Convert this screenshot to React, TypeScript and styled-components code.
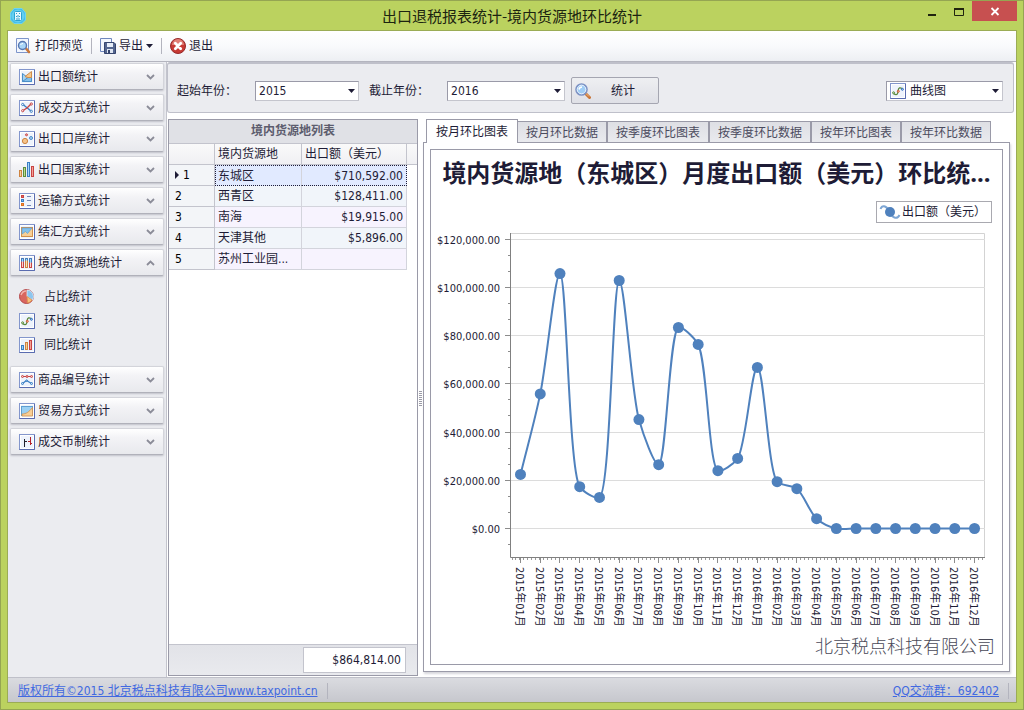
import React, { useState } from "react";
import styled, { createGlobalStyle, css } from "styled-components";

const ink = "#1e1c36";
const line = "#9a9aa8";
const softLine = "#c3c4cd";
const surface = "#ebecf0";
const uiFont = '"DejaVu Sans Condensed", "Noto Sans CJK SC", sans-serif';

const GlobalStyle = createGlobalStyle`
  * { box-sizing: border-box; }
  body { margin: 0; font: 12px/16px ${uiFont}; color: ${ink}; }
  button, select { font: inherit; color: inherit; }
`;

const Window = styled.div`
  min-height: 100vh;
  display: flex;
  flex-direction: column;
  padding: 0 6px 6px;
  background: #bbd25f;
  border: 1px solid #95a552;
`;

const TitleBar = styled.header`
  display: flex;
  height: 29px;
  flex: none;
`;

const TitleSide = styled.div<{ $end?: boolean }>`
  flex: 1;
  display: flex;
  align-items: ${(p) => (p.$end ? "flex-start" : "center")};
  justify-content: ${(p) => (p.$end ? "flex-end" : "flex-start")};
  padding-left: 3px;
`;

const WindowTitle = styled.h1`
  margin: 0;
  font: 15px/29px "Noto Sans CJK SC", sans-serif;
  color: #1c2410;
`;

const WindowButton = styled.button<{ $close?: boolean }>`
  width: ${(p) => (p.$close ? 45 : 27)}px;
  height: 20px;
  padding: 0;
  border: 0;
  display: flex;
  align-items: center;
  justify-content: center;
  background: ${(p) => (p.$close ? "#c75050" : "transparent")};
`;

const Client = styled.div`
  flex: 1;
  display: flex;
  flex-direction: column;
  border: 1px solid #9bac55;
  background: #fff;
`;

const Toolbar = styled.nav`
  height: 31px;
  flex: none;
  display: flex;
  align-items: center;
  padding-left: 8px;
  gap: 8px;
  background: linear-gradient(#fff, #f9fafc 50%, #edeff3);
  border-bottom: 1px solid #b4b5bf;
`;

const ToolButton = styled.button`
  display: flex;
  align-items: center;
  gap: 3px;
  height: 24px;
  padding: 0;
  border: 0;
  background: none;
`;

const Divider = styled.span`
  width: 1px;
  height: 16px;
  background: #b3b4be;
`;

const Body = styled.div`
  flex: 1;
  display: flex;
`;

const Sidebar = styled.aside`
  width: 159px;
  flex: none;
  display: flex;
  flex-direction: column;
  gap: 4px;
  padding: 1px 2px 0;
  background: ${surface};
  border-right: 1px solid ${softLine};
`;

const GroupButton = styled.button`
  display: flex;
  align-items: center;
  gap: 3px;
  width: 100%;
  height: 27px;
  padding: 0 8px;
  border: 1px solid #d3d4da;
  border-bottom-color: #b0b1ba;
  border-radius: 2px;
  box-shadow: 0 1px 2px rgba(80, 80, 100, 0.28);
  background: linear-gradient(#fff, #f3f3f6 35%, #e8e9ed);

  span { flex: 1; text-align: left; }
`;

const SubList = styled.ul`
  list-style: none;
  margin: 0;
  padding: 5px 0;
`;

const SubItem = styled.a`
  display: flex;
  align-items: center;
  gap: 9px;
  height: 24px;
  padding-left: 9px;
  color: inherit;
  text-decoration: none;
`;

const Main = styled.main`
  flex: 1;
  min-width: 0;
  display: flex;
  flex-direction: column;
`;

const FilterBar = styled.form`
  display: flex;
  align-items: center;
  gap: 10px;
  height: 51px;
  padding: 5px 10px 0 9px;
  margin-right: 2px;
  background: ${surface};
  border: 1px solid #bfc0ca;
  border-width: 2px 1px 1px;
  border-radius: 3px;
`;

const Field = styled.label`
  display: flex;
  align-items: center;
  gap: 18px;
`;

const SelectBox = styled.span<{ $width: number }>`
  display: flex;
  align-items: center;
  gap: 4px;
  width: ${(p) => p.$width}px;
  height: 20px;
  padding: 0 3px;
  background: #fff;
  border: 1px solid #c4c5cd;
  border-top-color: ${line};
  border-left-color: ${line};

  select {
    flex: 1;
    min-width: 0;
    height: 18px;
    padding: 0;
    border: 0;
    appearance: none;
    background: none;
    outline: 0;
  }
`;

const ActionButton = styled.button`
  display: flex;
  align-items: center;
  gap: 20px;
  width: 88px;
  height: 27px;
  padding: 0 3px;
  margin-left: -4px;
  border: 1px solid #a5a6b1;
  border-radius: 2px;
  background: linear-gradient(#eeeff2, #dfe0e6);
`;

const Spacer = styled.span`
  flex: 1;
`;

const Workspace = styled.div`
  flex: 1;
  display: flex;
  padding: 6px 6px 0 1px;
`;

const GridPanel = styled.section`
  width: 250px;
  flex: none;
  display: flex;
  flex-direction: column;
  margin-bottom: 1px;
  border: 1px solid ${line};
`;

const GridTitle = styled.h2`
  margin: 0;
  font: bold 12px/23px ${uiFont};
  text-align: center;
  color: #5d5d6e;
  background: #e0e1e6;
  border-bottom: 1px solid ${softLine};
`;

const DataTable = styled.table`
  width: 100%;
  table-layout: fixed;
  border-collapse: separate;
  border-spacing: 0;
`;

const cell = css`
  height: 21px;
  padding: 0 3px;
  text-align: left;
  font-weight: normal;
  white-space: nowrap;
  overflow: hidden;
  text-overflow: ellipsis;
  border: solid #d3d4dc;
  border-width: 0 1px 1px 0;
`;

const HeadCell = styled.th<{ $last?: boolean }>`
  ${cell}
  background: linear-gradient(#fafafa, #f0f0f3);
  border-color: ${softLine};
  ${(p) => p.$last && "border-right: 0;"}
`;

const RowHead = styled.th`
  ${cell}
  padding-left: 6px;
  color: #000;
  background: #f3f5f8;
  border-color: ${softLine};

  svg { margin-right: 4px; }
`;

const Cell = styled.td<{ $tone: "current" | "even" | "odd"; $edge?: "start" | "end" }>`
  ${cell}
  text-align: ${(p) => (p.$edge === "end" ? "right" : "left")};
  background: ${(p) => ({ current: "#e1eaff", even: "#f1f5fa", odd: "#f7f3fe" })[p.$tone]};
  ${(p) =>
    p.$tone === "current" &&
    css`
      border-top: 1px dotted ${ink};
      border-bottom: 1px dotted ${ink};
      ${p.$edge === "start" ? `border-left: 1px dotted ${ink}; padding-left: 2px;` : `border-right: 1px dotted ${ink};`}
    `}
`;

const GridFooter = styled.footer`
  height: 31px;
  margin-top: auto;
  padding: 2px 11px 0 0;
  display: flex;
  justify-content: flex-end;
  align-items: flex-start;
  border-top: 1px solid ${softLine};
  background: linear-gradient(#e2e3e8, #e9eaee);
`;

const Total = styled.output`
  width: 103px;
  padding: 0 4px;
  line-height: 24px;
  text-align: right;
  background: #fff;
  border: 1px solid ${softLine};
`;

const Splitter = styled.div`
  width: 5px;
  flex: none;
  display: flex;
  align-items: center;
`;

const ChartPanel = styled.section`
  flex: 1;
  min-width: 0;
  display: flex;
  flex-direction: column;
  margin-bottom: 5px;
`;

const TabArea = styled.div`
  position: relative;
  z-index: 1;
  margin-bottom: -1px;
  padding-bottom: 1px;
`;

const TabList = styled.div`
  display: flex;
  align-items: flex-end;
  height: 23px;
  padding-left: 3px;
`;

const Tab = styled.button<{ $active: boolean }>`
  height: 21px;
  padding: 2px 8px 0;
  white-space: nowrap;
  color: #4b4b5e;
  border: 1px solid ${line};
  border-left-width: 0;
  border-right-width: 2px;
  border-bottom: 0;
  background: linear-gradient(#dedfe4, #e9eaee);

  &:last-child { border-right-width: 1px; }

  ${(p) =>
    p.$active &&
    css`
      height: 24px;
      margin-bottom: -1px;
      padding: 0 9px;
      color: ${ink};
      background: #fff;
      border-width: 1px 1px 0;
    `}
`;

const TabPane = styled.div`
  flex: 1;
  display: flex;
  flex-direction: column;
  padding: 6px;
  background: #fff;
  border: 1px solid ${line};
  box-shadow: 1px 2px 2px rgba(90, 90, 110, 0.25);
`;

const ChartCard = styled.figure`
  flex: 1;
  margin: 0;
  display: flex;
  flex-direction: column;
  border: 1px solid ${line};
`;

const ChartTitle = styled.figcaption`
  padding: 5px 0 10px;
  text-align: center;
  white-space: nowrap;
  overflow: hidden;
  font: bold 24px/36px "Noto Sans", "Noto Sans CJK SC", sans-serif;
`;

const Legend = styled.div`
  align-self: flex-end;
  display: flex;
  align-items: center;
  width: 116px;
  height: 22px;
  margin-right: 10px;
  padding-left: 2px;
  gap: 1px;
  white-space: nowrap;
  border: 1px solid #a9a9b0;
`;

const Plot = styled.svg`
  display: block;
  width: 100%;
  height: auto;
  margin-top: 3px;
  font: 11px ${uiFont};
  fill: ${ink};
`;

const Watermark = styled.p`
  margin: 0;
  padding-right: 7px;
  text-align: right;
  font: 300 18px/26px "Noto Sans CJK SC", sans-serif;
  color: #4a4a58;
`;

const StatusBar = styled.footer`
  display: flex;
  align-items: center;
  gap: 9px;
  height: 25px;
  flex: none;
  padding: 1px 7px 0 10px;
  border-top: 1px solid #bfc0c9;
  background: linear-gradient(#dadbe0, #c6c7cd);

  a { color: #4169e1; }
`;

/* ---- icons ---- */

const Svg = ({ children, w = 16, h = 16 }: { children: React.ReactNode; w?: number; h?: number }) => (
  <svg width={w} height={h} viewBox={`0 0 ${w} ${h}`} fill="none" aria-hidden="true">
    {children}
  </svg>
);

const Frame = () => (
  <>
    <rect x="0.5" y="0.5" width="15" height="15" fill="#eef3fc" stroke="#8396cc" />
    <path d="M15.5 1V15.5H0.5" stroke="#5a6cb0" />
    <rect x="1.5" y="1.5" width="13" height="13" stroke="#fff" />
  </>
);

const Lens = () => (
  <Svg>
    <path d="M10 10L14.5 14.5" stroke="#c8763a" strokeWidth="3" strokeLinecap="round" />
    <path d="M10.5 10L14 13.5" stroke="#f3bb7c" />
    <circle cx="6.5" cy="6.5" r="5.5" fill="#9fcdf5" stroke="#7d92c4" strokeWidth="1.6" />
    <circle cx="6.5" cy="6.5" r="4.3" stroke="#e6f1fc" />
    <path d="M4 6.5Q4.5 4 7 4" stroke="#fff" strokeWidth="1.5" />
  </Svg>
);

const icons: Record<string, React.ReactNode> = {
  area: (
    <Svg>
      <Frame />
      <path d="M3.5 12.5V4.5L8.5 8.5L12.5 12.5Z" fill="#a5d3f0" stroke="#4b8fc8" />
      <path d="M3.5 12.5L9 8.500L12.5 8.5V12.500Z" fill="#84bfe8" stroke="#4b8fc8" />
      <path d="M6 7.5L12.5 2.500V8.5H9Z" fill="#f8c88a" stroke="#cf8d4b" />
    </Svg>
  ),
  cross: (
    <Svg>
      <Frame />
      <path d="M4 4.500L12 11" stroke="#3a7fc4" strokeWidth="1.4" />
      <path d="M4 10.5L8 8L12 4" stroke="#c94444" strokeWidth="1.4" />
      <g fill="#fff">
        <circle cx="3.7" cy="4.5" r="1.1" stroke="#3a7fc4" />
        <circle cx="12.3" cy="11.3" r="1.1" stroke="#3a7fc4" />
        <circle cx="3.7" cy="10.7" r="1.1" stroke="#c94444" />
        <circle cx="12.3" cy="4" r="1.1" stroke="#c94444" />
      </g>
    </Svg>
  ),
  bubbles: (
    <Svg>
      <Frame />
      <circle cx="6" cy="10" r="2.6" fill="#f6c48a" stroke="#cd8340" />
      <circle cx="7.5" cy="3.8" r="1" fill="#f2a7a2" stroke="#c94444" />
      <circle cx="12" cy="7" r="1.5" fill="#a5d3f5" stroke="#4a8ac8" />
    </Svg>
  ),
  bars: (
    <Svg>
      <rect x="0.5" y="8.5" width="2" height="6" fill="#f9cf95" stroke="#cd8340" />
      <rect x="4.5" y="5.5" width="2" height="9" fill="#bfdc8f" stroke="#5b8c3c" />
      <rect x="8.5" y="0.5" width="2" height="14" fill="#a9d6f7" stroke="#3a7fc4" />
      <rect x="12.5" y="4.5" width="2" height="10" fill="#f3a095" stroke="#c94444" />
    </Svg>
  ),
  list: (
    <Svg>
      <Frame />
      <rect x="2.5" y="2.5" width="2" height="2" fill="#e06a5f" stroke="#c94444" />
      <rect x="2.5" y="6.5" width="2" height="2" fill="#7ab8ec" stroke="#3a7fc4" />
      <rect x="2.5" y="10.5" width="2" height="2" fill="#f39a40" stroke="#dd6e20" />
      <path d="M8 3.5H12M8 7.5H12M8 12.5H12" stroke="#7688b8" />
    </Svg>
  ),
  envelope: (
    <Svg>
      <Frame />
      <rect x="2.5" y="3.5" width="11" height="9" fill="#f8cf96" stroke="#d0904c" />
      <path d="M3 4H13L8.5 9.5L6.5 7.5L3 10Z" fill="#84c1ec" stroke="#5e9fd0" strokeWidth="0.7" />
    </Svg>
  ),
  stacked: (
    <Svg>
      <Frame />
      <rect x="2.5" y="3.5" width="2" height="9" fill="#fbd3cd" stroke="#c94444" />
      <rect x="6.5" y="3.5" width="2" height="9" fill="#fbe0b8" stroke="#cd8340" />
      <rect x="10.5" y="3.5" width="2" height="9" fill="#fbd3cd" stroke="#c94444" />
      <path d="M2.5 6.5V3.5H4.5V6.5M6.5 5.5V3.5H8.5V5.5M10.5 7.5V3.5H12.5V7.5" fill="#a9d6f7" stroke="#3a7fc4" />
    </Svg>
  ),
  pie: (
    <Svg>
      <circle cx="7.5" cy="7.5" r="7" fill="#d9665f" stroke="#b5484a" />
      <path d="M8 7.5V1A6.5 6.5 0 0 1 13.5 11Z" fill="#8fc6ee" stroke="#e9f4fb" strokeWidth="0.7" />
      <path d="M8 7.5L13 11A6.5 6.5 0 0 1 8.5 14Z" fill="#f7bf7c" stroke="#d98c48" strokeWidth="0.7" />
      <path d="M2 6Q3.5 2 7 2" stroke="#f3b3ad" strokeWidth="1.5" />
    </Svg>
  ),
  spline: (
    <Svg>
      <Frame />
      <path d="M3.5 10.5C7 13 8 11 8 8C8.5 4.5 10 4 12.5 6" stroke="#57883c" strokeWidth="1.3" />
      <circle cx="3.6" cy="9.8" r="1" fill="#dff0c4" stroke="#57883c" />
      <circle cx="8.3" cy="8.3" r="1" fill="#f9b4a0" stroke="#cf5a30" />
      <circle cx="12.4" cy="6.3" r="1" fill="#b8dcfa" stroke="#2d6cc0" />
    </Svg>
  ),
  columns: (
    <Svg>
      <Frame />
      <rect x="2.5" y="8.5" width="2" height="4" fill="#9fd0f5" stroke="#3a7fc4" />
      <rect x="6.5" y="5.5" width="2" height="7" fill="#f9cf95" stroke="#cd8340" />
      <rect x="10.5" y="3.5" width="2" height="9" fill="#f3a095" stroke="#c94444" />
    </Svg>
  ),
  lines: (
    <Svg>
      <Frame />
      <path d="M3.5 4.5H12.5" stroke="#c94444" />
      <path d="M3.5 11.5L7.5 8.5L12.5 11.5" stroke="#3a7fc4" strokeWidth="1.3" />
      <g fill="#f7c9c5" stroke="#c94444">
        <circle cx="3.5" cy="4.5" r="1" />
        <circle cx="8" cy="4.5" r="1" />
        <circle cx="12.5" cy="4.5" r="1" />
      </g>
      <g fill="#c6e0fa" stroke="#3a7fc4">
        <circle cx="3.5" cy="11.5" r="1" />
        <circle cx="7.7" cy="8.700" r="0.8" />
        <circle cx="12.5" cy="11.5" r="1" />
      </g>
    </Svg>
  ),
  landscape: (
    <Svg>
      <Frame />
      <rect x="2.5" y="3.5" width="11" height="9" fill="#9bd0f3" stroke="#5e9fd0" />
      <path d="M3 13V11C7 11 10 9 13.5 4.5V13Z" fill="#f8cf96" stroke="#d0904c" strokeWidth="0.8" />
    </Svg>
  ),
  stock: (
    <Svg>
      <Frame />
      <path d="M5.5 5V13M6 7.5H8" stroke="#20202c" />
      <path d="M11.5 3V11M9 7.5H11M12 9.5H13" stroke="#b5222a" />
    </Svg>
  ),
  export: (
    <Svg>
      <path d="M0.5 0.5H11.5V13.5H0.5Z" fill="#f3f7fd" stroke="#6e86bd" />
      <path d="M4.5 4.5H14L15.5 6V15.5H4.5Z" fill="#54668f" stroke="#35456e" />
      <rect x="7" y="5" width="6" height="4" fill="#e6edf8" />
      <rect x="7" y="11" width="6" height="4" fill="#dfe6f2" />
      <rect x="8" y="12" width="2" height="3" fill="#35456e" />
    </Svg>
  ),
  preview: (
    <Svg>
      <path d="M0.5 0.5H12.5V14.5H0.5Z" fill="#f3f7fd" stroke="#7d95cb" />
      <path d="M10 10.5L13 14" stroke="#c8763a" strokeWidth="2.6" strokeLinecap="round" />
      <circle cx="6.5" cy="7.5" r="4" fill="#a9d5f7" stroke="#5876b0" strokeWidth="1.4" />
      <path d="M4.5 7Q5 5.500 7 5.500" stroke="#fff" />
    </Svg>
  ),
  quit: (
    <Svg>
      <circle cx="8" cy="8" r="7.5" fill="#c73a34" stroke="#96292a" />
      <path d="M2 7A6 6 0 0 1 14 7" fill="#e07f76" />
      <path d="M5.3 5.3L10.7 10.7M10.7 5.3L5.3 10.7" stroke="#fff" strokeWidth="2.8" strokeLinecap="round" />
    </Svg>
  ),
  app: (
    <Svg>
      <path d="M4 0.5H12L15.5 5V12L12 15.5H4L0.5 12V5Z" fill="#45bfe8" stroke="#6fd3f0" />
      <circle cx="8" cy="8" r="6.5" fill="#64cff0" />
      <rect x="4.5" y="3.5" width="7" height="9" rx="1" fill="#e8f9ff" stroke="#2ba3d2" />
      <path d="M6 5.5H7M9 5.5H10M8 7V9.5M6 8L7 9M10 8L9 9M6 11H10" stroke="#2d9fca" />
    </Svg>
  ),
};

const Chevron = ({ up }: { up?: boolean }) => (
  <Svg w={9} h={6}>
    <path d={up ? "M1 5L4.5 1.5L8 5" : "M1 1L4.5 4.5L8 1"} stroke="#8b8c98" strokeWidth="1.8" />
  </Svg>
);

const Caret = () => (
  <Svg w={7} h={4}>
    <path d="M0 0H7L3.5 4Z" fill={ink} />
  </Svg>
);

/* ---- data ---- */

const groups: { icon: string; label: string; items?: [string, string][] }[] = [
  { icon: "area", label: "出口额统计" },
  { icon: "cross", label: "成交方式统计" },
  { icon: "bubbles", label: "出口口岸统计" },
  { icon: "bars", label: "出口国家统计" },
  { icon: "list", label: "运输方式统计" },
  { icon: "envelope", label: "结汇方式统计" },
  {
    icon: "stacked",
    label: "境内货源地统计",
    items: [["pie", "占比统计"], ["spline", "环比统计"], ["columns", "同比统计"]],
  },
  { icon: "lines", label: "商品编号统计" },
  { icon: "landscape", label: "贸易方式统计" },
  { icon: "stock", label: "成交币制统计" },
];

const rows = [
  ["东城区", "$710,592.00"],
  ["西青区", "$128,411.00"],
  ["南海", "$19,915.00"],
  ["天津其他", "$5,896.00"],
  ["苏州工业园...", ""],
];

const tabs = ["按月环比图表", "按月环比数据", "按季度环比图表", "按季度环比数据", "按年环比图表", "按年环比数据"];

const values = [
  22420, 55850, 105800, 17360, 12870, 102900, 45200, 26500, 83400, 76400, 24000, 29060,
  66850, 19430, 16520, 4070, 0, 0, 0, 0, 0, 0, 0, 0,
];

/* ---- chart ---- */

type Point = [number, number];
const left = 79;
const right = 554;
const top = 7;
const bottom = 331;
const zeroY = 302;
const yOf = (v: number) => zeroY - (v / 20000) * 48.2;
const xOf = (i: number) => 89.5 + i * 19.74;
const crisp = (v: number) => Math.floor(v) + 0.5;

const distance = (a: Point, b: Point) => Math.hypot(b[0] - a[0], b[1] - a[1]);

const unit = (a: Point, b: Point): Point => {
  const d = distance(a, b) || 1;
  return [(b[0] - a[0]) / d, (b[1] - a[1]) / d];
};

/* Smooth curve whose tangent at each point bisects its two segments;
   a short neighbouring segment pulls the handle of a long one in. */
function smoothPath(pts: Point[]) {
  const last = pts.length - 1;
  const lengths = pts.slice(1).map((p, i) => distance(pts[i], p));
  const tangent = (i: number): Point => {
    const j = Math.max(i - 1, 0);
    const k = Math.min(i, last - 1);
    const p = unit(pts[j], pts[j + 1]);
    const n = unit(pts[k], pts[k + 1]);
    return [(p[0] + n[0]) / 2, (p[1] + n[1]) / 2];
  };
  const reach = (own: number, neighbour = own) => Math.sqrt(own * Math.min(own, neighbour)) / 3;
  return pts.slice(1).reduce((d, b, i) => {
    const a = pts[i];
    const s = tangent(i);
    const e = tangent(i + 1);
    const rs = reach(lengths[i], lengths[i - 1]);
    const re = reach(lengths[i], lengths[i + 1]);
    return `${d}C${a[0] + s[0] * rs} ${a[1] + s[1] * rs} ${b[0] - e[0] * re} ${b[1] - e[1] * re} ${b[0]} ${b[1]}`;
  }, `M${pts[0][0]} ${pts[0][1]}`);
}

function SplineChart() {
  const pts = values.map((v, i): Point => [xOf(i), yOf(v) + 0.5]);
  const minor: number[] = [];
  for (let x = left + 2; x < right; x += 3.95) minor.push(crisp(x));
  const ySteps = Array.from({ length: 20 }, (_, i) => i - 1);
  return (
    <Plot viewBox="0 0 571 406" role="img" aria-label="出口额（美元）">
      <path d={`M${left} ${top + 0.5}H${right - 0.5}V${bottom}`} fill="none" stroke="#d3d3d3" />
      {ySteps.map((s) => {
        const y = crisp(yOf((s * 20000) / 3) + 0.4);
        const major = s % 3 === 0;
        return (
          <g key={s}>
            {major && <path d={`M${left + 1} ${y}H${right}`} stroke="#dcdcdc" />}
            <path d={`M${left - (major ? 5 : 2)} ${y}H${left}`} stroke="#8c8c8c" />
            {major && (
              <text x={69} y={y + 4} textAnchor="end">
                {`$${((s / 3) * 20000).toLocaleString("en-US")}.00`}
              </text>
            )}
          </g>
        );
      })}
      {minor.map((x) => (
        <path key={x} d={`M${x} ${bottom + 1}v2`} stroke="#9a9a9a" />
      ))}
      <path d={`M${left + 0.5} ${top}V${bottom + 0.5}H${right}`} fill="none" stroke="#808080" />
      <path d={smoothPath(pts)} fill="none" stroke="#4f81bd" strokeWidth="2" />
      {pts.map(([x, y], i) => {
        const label = `${2015 + Math.floor(i / 12)}年${String((i % 12) + 1).padStart(2, "0")}月`;
        return (
          <g key={label}>
            <circle cx={x} cy={y} r="5.5" fill="#4f81bd" />
            <path d={`M${crisp(x)} ${bottom + 1}v5`} stroke="#8c8c8c" />
            <text transform={`translate(${Math.floor(x) - 4} 341) rotate(90)`}>{label}</text>
          </g>
        );
      })}
    </Plot>
  );
}

export default function App() {
  const [tab, setTab] = useState(0);
  return (
    <Window>
      <GlobalStyle />
      <TitleBar>
        <TitleSide>{icons.app}</TitleSide>
        <WindowTitle>出口退税报表统计-境内货源地环比统计</WindowTitle>
        <TitleSide $end>
          <WindowButton aria-label="最小化">
            <Svg><path d="M4 12H12" stroke="#20240f" strokeWidth="2" /></Svg>
          </WindowButton>
          <WindowButton aria-label="最大化">
            <Svg>
              <path d="M3.5 5.5H12.5V12.5H3.5Z" stroke="#20240f" />
              <path d="M3 6H13" stroke="#20240f" strokeWidth="2" />
            </Svg>
          </WindowButton>
          <WindowButton $close aria-label="关闭">
            <Svg><path d="M4.500 5L11.5 12M11.5 5L4.5 12" stroke="#fff" strokeWidth="1.8" /></Svg>
          </WindowButton>
        </TitleSide>
      </TitleBar>
      <Client>
        <Toolbar>
          <ToolButton>{icons.preview}打印预览</ToolButton>
          <Divider />
          <ToolButton>{icons.export}导出<Caret /></ToolButton>
          <Divider />
          <ToolButton>{icons.quit}退出</ToolButton>
        </Toolbar>
        <Body>
          <Sidebar>
            {groups.map((g) => (
              <React.Fragment key={g.label}>
                <GroupButton aria-expanded={!!g.items}>
                  {icons[g.icon]}
                  <span>{g.label}</span>
                  <Chevron up={!!g.items} />
                </GroupButton>
                {g.items && (
                  <SubList>
                    {g.items.map(([icon, label]) => (
                      <li key={label}>
                        <SubItem href="#">{icons[icon]}{label}</SubItem>
                      </li>
                    ))}
                  </SubList>
                )}
              </React.Fragment>
            ))}
          </Sidebar>
          <Main>
            <FilterBar onSubmit={(e) => e.preventDefault()}>
              <Field>
                起始年份：
                <SelectBox $width={104}>
                  <select defaultValue="2015">
                    <option>2015</option>
                    <option>2016</option>
                  </select>
                  <Caret />
                </SelectBox>
              </Field>
              <Field>
                截止年份：
                <SelectBox $width={118}>
                  <select defaultValue="2016">
                    <option>2015</option>
                    <option>2016</option>
                  </select>
                  <Caret />
                </SelectBox>
              </Field>
              <ActionButton><Lens />统计</ActionButton>
              <Spacer />
              <SelectBox $width={117}>
                {icons.spline}
                <select aria-label="图表类型"><option>曲线图</option></select>
                <Caret />
              </SelectBox>
            </FilterBar>
            <Workspace>
              <GridPanel>
                <GridTitle>境内货源地列表</GridTitle>
                <DataTable>
                  <colgroup>
                    <col width="46" />
                    <col width="87" />
                    <col width="105" />
                    <col />
                  </colgroup>
                  <thead>
                    <tr>
                      <HeadCell />
                      <HeadCell>境内货源地</HeadCell>
                      <HeadCell>出口额（美元）</HeadCell>
                      <HeadCell $last />
                    </tr>
                  </thead>
                  <tbody>
                    {rows.map(([name, amount], i) => {
                      const tone = i === 0 ? "current" : i % 2 ? "even" : "odd";
                      return (
                        <tr key={name}>
                          <RowHead>
                            {i === 0 && <Svg w={4} h={8}><path d="M0 0L4 4L0 8Z" fill={ink} /></Svg>}
                            {i + 1}
                          </RowHead>
                          <Cell $tone={tone} $edge="start">{name}</Cell>
                          <Cell $tone={tone} $edge="end">{amount}</Cell>
                        </tr>
                      );
                    })}
                  </tbody>
                </DataTable>
                <GridFooter><Total>$864,814.00</Total></GridFooter>
              </GridPanel>
              <Splitter>
                <Svg w={4} h={15}>
                  <path
                    d="M1 0.5H4M1 2.5H4M1 4.5H4M1 6.5H4M1 8.5H4M1 10.5H4M1 12.5H4M1 14.5H4"
                    stroke="#9b9ba6"
                  />
                </Svg>
              </Splitter>
              <ChartPanel>
                <TabArea>
                  <TabList role="tablist">
                    {tabs.map((t, i) => (
                      <Tab key={t} role="tab" aria-selected={i === tab} $active={i === tab} onClick={() => setTab(i)}>
                        {t}
                      </Tab>
                    ))}
                  </TabList>
                </TabArea>
                <TabPane role="tabpanel">
                  <ChartCard>
                    <ChartTitle>境内货源地（东城区）月度出口额（美元）环比统...</ChartTitle>
                    <Legend>
                      <Svg w={22} h={16}>
                        <path d="M1.5 5C3 1 7 1 10 7C13 14 18 16 20.5 11" stroke="#7ea6d4" strokeWidth="2" />
                        <circle cx="11" cy="8" r="5" fill="#4f81bd" />
                      </Svg>
                      出口额（美元）
                    </Legend>
                    <SplineChart />
                    <Watermark>北京税点科技有限公司</Watermark>
                  </ChartCard>
                </TabPane>
              </ChartPanel>
            </Workspace>
          </Main>
        </Body>
        <StatusBar>
          <a href="#">版权所有©2015 北京税点科技有限公司www.taxpoint.cn</a>
          <Divider />
          <Spacer />
          <a href="#">QQ交流群：692402</a>
          <Divider />
        </StatusBar>
      </Client>
    </Window>
  );
}
